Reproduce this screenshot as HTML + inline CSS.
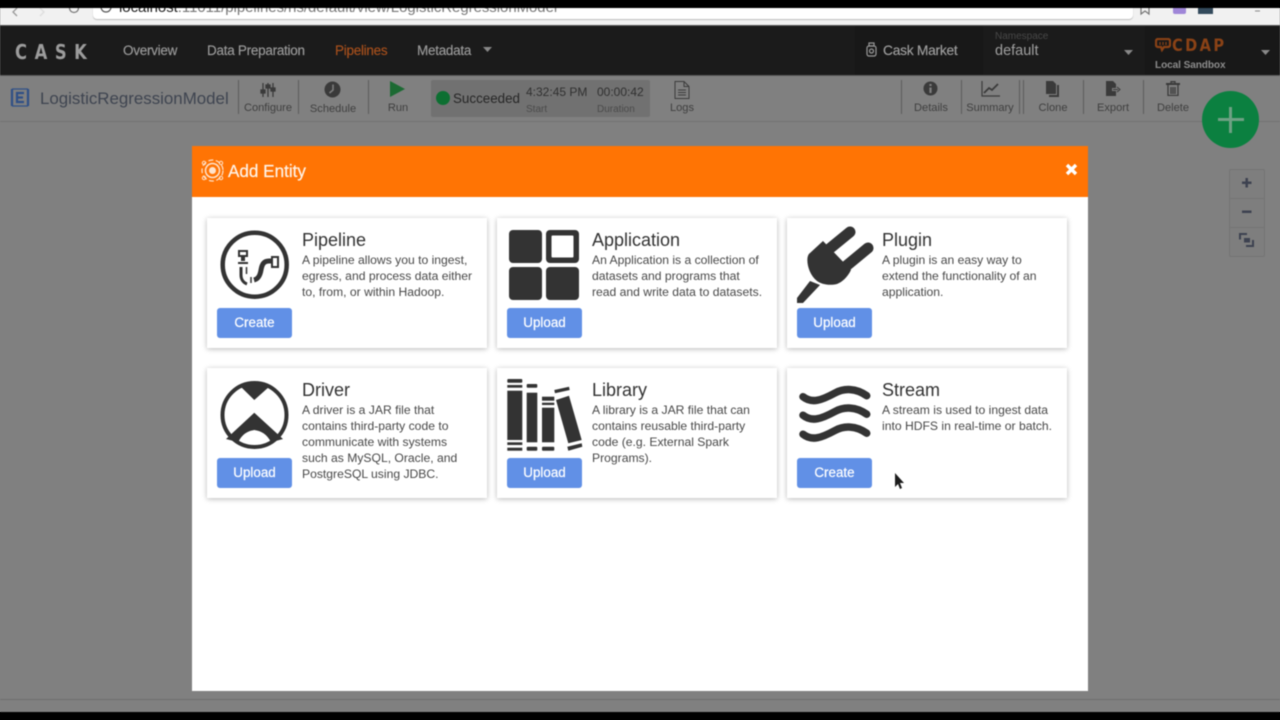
<!DOCTYPE html>
<html><head><meta charset="utf-8"><style>
html,body{margin:0;padding:0;width:1280px;height:720px;overflow:hidden;background:linear-gradient(#000 0 8px,#808080 8px 712px,#000 712px)}
body{font-family:"Liberation Sans",sans-serif;position:relative}
#root{position:absolute;inset:0;filter:blur(.5px)}
.a{position:absolute;white-space:nowrap}
.tb{color:#3f3f3f;font-size:11.1px;line-height:14px;transform:translateX(-50%)}
.sep{position:absolute;top:80px;width:1px;height:34px;background:#5c5c5c}
.card{position:absolute;width:280px;height:130px;background:#fff;box-shadow:0 1px 5px rgba(0,0,0,.28)}
.card h3{position:absolute;left:95px;top:12px;margin:0;font-weight:400;font-size:18px;line-height:20px;color:#333}
.card p{position:absolute;left:95px;top:33.6px;margin:0;font-size:12.15px;line-height:16px;color:#484848;white-space:nowrap}
.btn{position:absolute;left:10px;top:90px;width:75px;height:29.5px;background:#6190e6;border-radius:3px;color:#fff;font-size:13.4px;line-height:29px;text-align:center;-webkit-text-stroke:.2px #fff}
.card svg{position:absolute}
.nav{color:#9a9a9a;font-size:13.5px;line-height:16px;top:42.6px;letter-spacing:-.27px;-webkit-text-stroke:.15px #9a9a9a}
</style></head><body><div id="root">
<!-- browser bar -->
<div class="a" style="left:0;top:8px;width:1280px;height:18px;background:#f1f1f1;overflow:hidden">
 <div class="a" style="left:93px;top:-8px;width:1040px;height:19px;background:#fff;border-radius:4px;box-shadow:0 1px 1px #bbb"></div>
 <svg class="a" style="left:0;top:-8px" width="120" height="26"><path d="M17 8l-4 4 4 4" fill="none" stroke="#999" stroke-width="1.3"/><path d="M40 8l4 4-4 4" fill="none" stroke="#ddd" stroke-width="1.3"/><circle cx="74" cy="8" r="4.500" fill="none" stroke="#777" stroke-width="1.200"/><circle cx="106" cy="7" r="5" fill="none" stroke="#555" stroke-width="1.200"/></svg>
 <div class="a" style="left:119px;top:-9px;font-size:14.900px;line-height:18px;color:#777"><span style="color:#222">localhost</span>:11011/pipelines/ns/default/view/LogisticRegressionModel</div>
 <svg class="a" style="left:1135px;top:-8px" width="145" height="26"><path d="M6 6v8l4-3 4 3V6z" fill="none" stroke="#777" stroke-width="1.200"/><rect x="38" y="7" width="13" height="7" rx="2" fill="#9f86d8"/><rect x="63" y="8" width="15" height="6" fill="#334a5c"/><path d="M120 11h5" stroke="#888"/></svg>
</div>
<!-- nav -->
<div class="a" style="left:0;top:25px;width:1280px;height:50px;background:#1b1b1b"></div>
<div class="a" style="left:0;top:25px;width:1280px;height:1px;background:#555"></div>
<div class="a" style="left:15px;top:40px;font-size:20px;line-height:24px;color:#9c9c9c;font-weight:700;letter-spacing:9.200px;font-family:'DejaVu Sans',sans-serif;transform:scaleX(.82);transform-origin:0 0">CASK</div>
<div class="a nav" style="left:123px">Overview</div>
<div class="a nav" style="left:207px">Data Preparation</div>
<div class="a nav" style="left:335px;color:#a8501c;-webkit-text-stroke:.15px #a8501c">Pipelines</div>
<div class="a nav" style="left:417px">Metadata</div>
<svg class="a" style="left:483px;top:47px" width="10" height="6"><path d="M0 0h9L4.500 5z" fill="#888"/></svg>
<div class="a" style="left:855px;top:26px;width:128px;height:49px;background:#181818"></div>
<svg class="a" style="left:865px;top:42px" width="13" height="15" fill="none" stroke="#999" stroke-width="1.200"><rect x="2" y="4" width="9" height="10" rx="2"/><rect x="4" y="1" width="5" height="3"/><circle cx="6.500" cy="9" r="2"/></svg>
<div class="a nav" style="left:883px;color:#a0a0a0;font-size:13.800px">Cask Market</div>
<div class="a" style="left:995px;top:31px;font-size:10px;line-height:12px;color:#484848">Namespace</div>
<div class="a" style="left:995px;top:43px;font-size:14.500px;line-height:16px;color:#a0a0a0">default</div>
<svg class="a" style="left:1124px;top:50px" width="10" height="6"><path d="M0 0h9L4.500 5z" fill="#888"/></svg>
<div class="a" style="left:1145px;top:26px;width:135px;height:49px;background:#181818"></div>
<svg class="a" style="left:1155px;top:38px" width="16" height="14" fill="none" stroke="#8a4216" stroke-width="2.200"><path d="M3 1h10a2 2 0 0 1 2 2v4a2 2 0 0 1-2 2H9l-2 3-1-3H3a2 2 0 0 1-2-2V3a2 2 0 0 1 2-2z"/><path d="M5 4v3M8 4v3M11 4v3" stroke-width="1.200"/></svg>
<div class="a" style="left:1172px;top:36px;font-size:17px;line-height:20px;color:#8a4216;font-weight:700;letter-spacing:2.800px;font-family:'DejaVu Sans',sans-serif;transform:scaleX(.86);transform-origin:0 0">CDAP</div>
<div class="a" style="left:1155px;top:60px;font-size:10.100px;line-height:12px;color:#8c8c8c;font-weight:700;letter-spacing:-.1px">Local Sandbox</div>
<svg class="a" style="left:1261px;top:50px" width="10" height="6"><path d="M0 0h9L4.500 5z" fill="#888"/></svg>
<!-- page bg -->
<div class="a" style="left:0;top:75px;width:1280px;height:637px;background:#808080"></div>
<div class="a" style="left:0;top:75px;width:1280px;height:1px;background:#5a5a5a"></div>
<div class="a" style="left:0;top:121px;width:1280px;height:1px;background:#727272"></div>
<div class="a" style="left:0;top:699px;width:1280px;height:1px;background:#6e6e6e"></div>
<!-- toolbar -->
<svg class="a" style="left:9px;top:87px" width="22" height="22" fill="none" stroke="#2f4f86" stroke-width="2.200"><path d="M3 2v17M19 2v17"/><path d="M3 2h16M3 19h16" stroke-width="1.300"/><path d="M15 6H8v9h7M8 10.500h6"/></svg>
<div class="a" style="left:40px;top:89px;font-size:16.900px;line-height:19px;color:#3e4450">LogisticRegressionModel</div>
<div class="sep" style="left:238px"></div><div class="sep" style="left:298px"></div><div class="sep" style="left:368px"></div>
<svg class="a" style="left:260px;top:82px" width="16" height="16" stroke="#3a3a3a" stroke-width="1.300" fill="#3a3a3a"><path d="M3 1v14M8 1v14M13 1v14"/><rect x="1" y="8" width="4" height="3"/><rect x="6" y="3" width="4" height="3"/><rect x="11" y="6" width="4" height="3"/></svg>
<div class="a tb" style="left:268px;top:101px">Configure</div>
<svg class="a" style="left:324px;top:81px" width="17" height="17"><circle cx="8.500" cy="8.500" r="8" fill="#3a3a3a"/><path d="M9 3.500v5.500L5.500 12" stroke="#808080" stroke-width="1.500" fill="none"/></svg>
<div class="a tb" style="left:333px;top:102px">Schedule</div>
<svg class="a" style="left:389px;top:81px" width="17" height="16"><path d="M1 0l15 8-15 8z" fill="#1c6a33"/></svg>
<div class="a tb" style="left:398px;top:101px">Run</div>
<div class="a" style="left:431px;top:80px;width:219px;height:37px;background:#717171;border-radius:2px"></div>
<div class="a" style="left:436px;top:91px;width:14px;height:14px;border-radius:50%;background:#0c6f31"></div>
<div class="a" style="left:453px;top:91px;font-size:13.400px;line-height:16px;color:#262626">Succeeded</div>
<div class="a" style="left:526px;top:85px;font-size:12px;line-height:14px;color:#303030">4:32:45 PM</div>
<div class="a" style="left:597px;top:85px;font-size:12px;line-height:14px;color:#303030">00:00:42</div>
<div class="a" style="left:526px;top:104px;font-size:10px;line-height:12px;color:#4a4a4a">Start</div>
<div class="a" style="left:597px;top:104px;font-size:10px;line-height:12px;color:#4a4a4a">Duration</div>
<svg class="a" style="left:674px;top:81px" width="16" height="18" fill="none" stroke="#3c3c3c" stroke-width="1"><path d="M1 .500h9l5 5v12H1z"/><path d="M10 .500v5h5M4 9h8M4 11.500h8M4 14h8"/></svg>
<div class="a tb" style="left:682px;top:101px">Logs</div>
<div class="sep" style="left:901px"></div><div class="sep" style="left:961px"></div><div class="sep" style="left:1019px"></div><div class="sep" style="left:1023px"></div><div class="sep" style="left:1083px"></div><div class="sep" style="left:1143px"></div>
<svg class="a" style="left:923px;top:81px" width="15" height="15"><circle cx="7.500" cy="7.500" r="7" fill="#3a3a3a"/><path d="M7.500 3v2M7.500 6.500V12" stroke="#808080" stroke-width="2.200"/></svg>
<div class="a tb" style="left:931px;top:101px">Details</div>
<svg class="a" style="left:981px;top:81px" width="19" height="16" fill="none" stroke="#3a3a3a" stroke-width="1.200"><path d="M1 0v15h18"/><path d="M3 12l5-5 3 2 6-6" stroke-width="1.800"/></svg>
<div class="a tb" style="left:990px;top:101px">Summary</div>
<svg class="a" style="left:1045px;top:81px" width="15" height="16" fill="#3a3a3a"><path d="M1 0h7l3 3v10H1z"/><path d="M12 4h2v12H4v-2h8z"/></svg>
<div class="a tb" style="left:1053px;top:101px">Clone</div>
<svg class="a" style="left:1105px;top:81px" width="16" height="16"><path d="M1 0h7l3 3v4H7v3h4v5H1z" fill="#3a3a3a"/><path d="M8 8.500h5M12 6l3 2.500-3 2.500" stroke="#3a3a3a" fill="none"/></svg>
<div class="a tb" style="left:1113px;top:101px">Export</div>
<svg class="a" style="left:1166px;top:81px" width="14" height="15" fill="none" stroke="#3a3a3a" stroke-width="1.300"><path d="M0 3h14" stroke-width="2"/><path d="M5 2V.700h4V2"/><path d="M2 4v10.500h10V4M5 6v7M7 6v7M9 6v7"/></svg>
<div class="a tb" style="left:1173px;top:101px">Delete</div>
<div class="a" style="left:1202px;top:91px;width:57px;height:57px;border-radius:50%;background:#0b8040"></div>
<div class="a" style="left:1218px;top:118px;width:26px;height:3px;background:#6ea184"></div>
<div class="a" style="left:1229px;top:107px;width:3px;height:26px;background:#6ea184"></div>
<!-- zoom -->
<div class="a" style="left:1229px;top:169px;width:34px;height:86px;background:#7e7e7e;border:1px solid #747474;border-radius:2px"></div>
<div class="a" style="left:1229px;top:198px;width:35px;height:1px;background:#747474"></div>
<div class="a" style="left:1229px;top:227px;width:35px;height:1px;background:#747474"></div>
<svg class="a" style="left:1239px;top:176px" width="16" height="72" stroke="#3d4250" stroke-width="2.500" fill="none"><path d="M3 6.700h9.500M7.700 2v9.500M3 35.700h9.500"/><path d="M1 63.500V58h7M14 64v6H7" stroke-width="2"/><rect x="5" y="62" width="6" height="4.500" fill="#3d4250" stroke="none"/></svg>
<!-- modal -->
<div class="a" style="left:192px;top:197px;width:896px;height:494px;background:#fff"></div>
<div class="a" style="left:192px;top:146px;width:896px;height:51px;background:#ff7404"></div>
<svg class="a" style="left:200px;top:158px" width="25" height="25" fill="none" stroke="#ffe3cc"><circle cx="12.500" cy="12.500" r="10.500" stroke-dasharray="5 2.500" stroke-width="1.200"/><circle cx="12.500" cy="12.500" r="7" stroke-width="1.500"/><circle cx="12.500" cy="12.500" r="3.500" fill="#ffe3cc" stroke="none"/><circle cx="4" cy="5" r="1.700"/><circle cx="21" cy="5" r="1.700"/><circle cx="4" cy="20" r="1.700"/><circle cx="21" cy="20" r="1.700"/></svg>
<div class="a" style="left:228px;top:161px;font-size:17.100px;line-height:21px;color:#fff3e8;-webkit-text-stroke:.2px #fff3e8">Add Entity</div>
<svg class="a" style="left:1065px;top:163px" width="13" height="13"><path d="M2 2l9 9M11 2l-9 9" stroke="#fff" stroke-width="3.400"/></svg>
<!-- cards -->
<div class="card" style="left:207px;top:218px"><h3>Pipeline</h3><p>A pipeline allows you to ingest,<br>egress, and process data either<br>to, from, or within Hadoop.</p><div class="btn">Create</div>
<svg style="left:13px;top:12px" width="70" height="70" fill="none" stroke="#333"><circle cx="34.700" cy="34.700" r="32" stroke-width="4.500"/><rect x="19" y="21" width="8" height="5" stroke-width="2"/><path d="M23 26v5" stroke-width="4"/><path d="M18 33h10" stroke-width="2"/><path d="M21 37v8c0 5 3 8 6 9" stroke-width="3"/><path d="M26.500 37v7" stroke-width="1.500"/><path d="M31 47v6" stroke-width="1.500"/><path d="M34 50c4-1 6-4 7-10 1-6 3-9 8-9h4" stroke-width="5"/><rect x="52" y="27" width="6" height="10" fill="#fff" stroke-width="2"/></svg></div>
<div class="card" style="left:497px;top:218px"><h3>Application</h3><p>An Application is a collection of<br>datasets and programs that<br>read and write data to datasets.</p><div class="btn">Upload</div>
<svg style="left:12px;top:12px" width="72" height="72" fill="#333"><rect x="0" y="0" width="33" height="33" rx="4"/><rect x="37" y="0" width="33" height="33" rx="4"/><rect x="42.500" y="5.500" width="22" height="22" rx="1" fill="#fff"/><rect x="0" y="37" width="33" height="33" rx="4"/><rect x="37" y="37" width="33" height="33" rx="4"/></svg></div>
<div class="card" style="left:787px;top:218px"><h3>Plugin</h3><p>A plugin is an easy way to<br>extend the functionality of an<br>application.</p><div class="btn">Upload</div>
<svg style="left:10px;top:8px" width="78" height="78" fill="#333"><path d="M31 24L53 6M48 41L71 22" stroke="#333" stroke-width="11" stroke-linecap="round" fill="none"/><path d="M26 15L54 44C50 52 45 56 40 58C32 60 24 58 20 55C10 47 8 30 13 27Z"/><path d="M13 55L0 72V77H6L23 59Z"/></svg></div>
<div class="card" style="left:207px;top:368px"><h3>Driver</h3><p>A driver is a JAR file that<br>contains third-party code to<br>communicate with systems<br>such as MySQL, Oracle, and<br>PostgreSQL using JDBC.</p><div class="btn">Upload</div>
<svg style="left:13px;top:12px" width="70" height="70"><circle cx="34.500" cy="35" r="32" fill="none" stroke="#333" stroke-width="4"/><path d="M20 6L34.300 20L50 6A33 33 0 0 0 20 6z" fill="#333"/><path d="M34.300 32.700L6 59L18.300 62.300C22 54 28 51 34.300 50C41 51 47 54 51 62.300L63 59z" fill="#333"/></svg></div>
<div class="card" style="left:497px;top:368px"><h3>Library</h3><p>A library is a JAR file that can<br>contains reusable third-party<br>code (e.g. External Spark<br>Programs).</p><div class="btn">Upload</div>
<svg style="left:9px;top:10px" width="78" height="76" fill="#333"><rect x="1.300" y="1" width="15" height="3.700" rx="1"/><rect x="1.300" y="7" width="15" height="2.700"/><rect x="1.300" y="12.700" width="15" height="49.300"/><rect x="1.300" y="64.300" width="15" height="2.700"/><rect x="1.300" y="69.700" width="15" height="3"/><rect x="20.700" y="6" width="10.600" height="3.700" rx="1"/><rect x="20.700" y="14.700" width="10.600" height="49.600"/><rect x="20.700" y="68.700" width="10.600" height="4" rx="1"/><rect x="36" y="18.700" width="12.300" height="4"/><rect x="36" y="24.700" width="12.300" height="2.300"/><rect x="36" y="29.700" width="12.300" height="34.600"/><rect x="36" y="68.700" width="12.300" height="4" rx="1"/><path d="M48.300 12L63 8.700L63.700 12L49 15.300z"/><path d="M50 22L63 17.700L75.700 62L62.300 65.300z"/><path d="M61.300 68.700L75.700 65.300L76.300 68.700L62.300 72.700z"/></svg></div>
<div class="card" style="left:787px;top:368px"><h3>Stream</h3><p>A stream is used to ingest data<br>into HDFS in real-time or batch.</p><div class="btn">Create</div>
<svg style="left:11px;top:16px" width="74" height="64" fill="none" stroke="#333" stroke-width="7.500" stroke-linecap="round"><path d="M5 12.700C14 20 24 16 37 9C46 4 58 4 68.700 11.700"/><path d="M5 31.200C14 38.500 24 34.500 37 27.500C46 22.500 58 22.500 68.700 30.200"/><path d="M5 50.200C14 57.500 24 53.500 37 46.500C46 41.500 58 41.500 68.700 49.200"/></svg></div>
<svg class="a" style="left:895px;top:473px" width="11" height="18"><path d="M0 0v14l3-3 2 5 2-1-2-5h4z" fill="#1c1c1c"/></svg>
<div class="a" style="left:0;top:712px;width:1280px;height:8px;background:#000"></div>
<div class="a" style="left:0;top:0;width:1280px;height:8px;background:#000"></div>
</div></body></html>
